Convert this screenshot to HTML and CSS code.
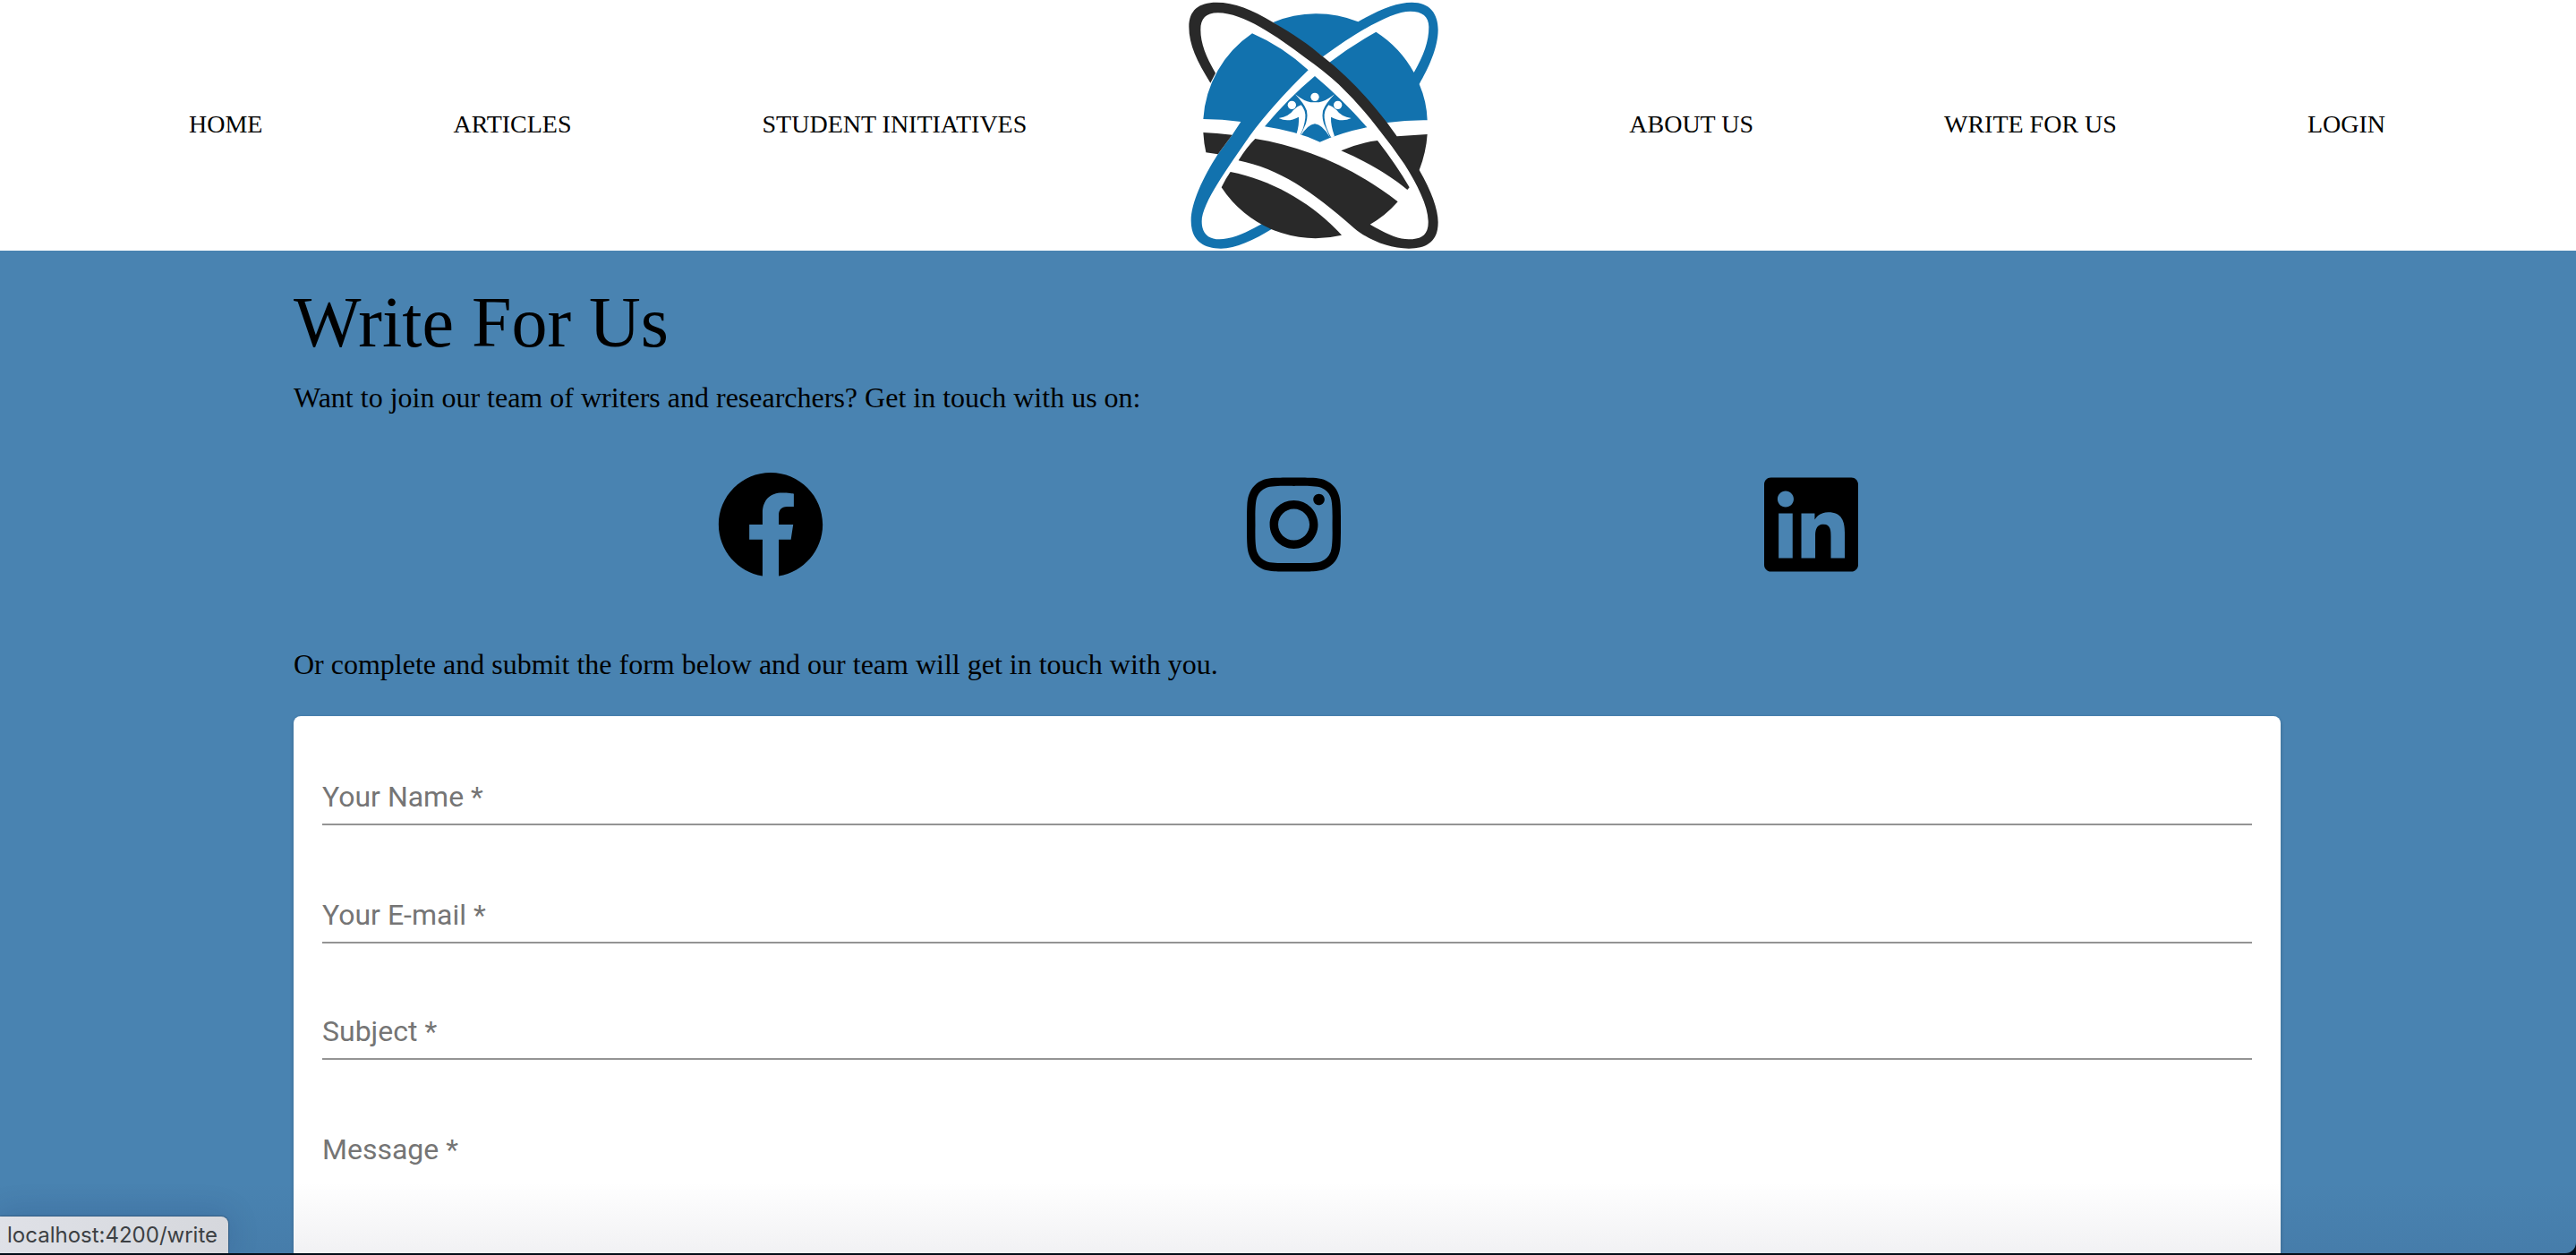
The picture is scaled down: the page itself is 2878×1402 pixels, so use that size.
FILE: index.html
```html
<!DOCTYPE html>
<html lang="en">
<head>
<meta charset="utf-8">
<title>Write For Us</title>
<link rel="stylesheet" href="styles.css">
</head>
<body>
<header class="navbar">
  <a class="nav-link">HOME</a>
  <a class="nav-link">ARTICLES</a>
  <a class="nav-link">STUDENT INITIATIVES</a>
  <svg class="logo" viewBox="54 0 840 840" aria-label="Logo">
    <g fill="#1272ae">
      <path d="M106 399A376 376 0 0 1 270 112Q370 155 458 235C380 310 310 390 262 455C190 560 101 680 101 742C101 785 125 802 160 802C200 802 250 780 303 750L340 765C275 805 215 833 165 833C100 833 65 800 65 740C65 680 105 595 155 517L203 452L232 408Q170 399 106 399Z"/>
      <path d="M340 75A376 376 0 0 1 625 73C700 30 755 8 805 8C865 8 893 45 893 100C893 160 860 230 830 282Q855 340 857 403Q790 402 722 411L660 360L528 210Q600 155 685 107A376 376 0 0 1 812 243C845 185 862 140 862 90C862 55 840 38 800 38C740 38 630 100 507 190Z"/>
      <path d="M480 255Q575 335 655 427Q570 444 497 476Q420 440 312 424Q390 330 480 255Z"/>
    </g>
    <g fill="#292929">
      <path d="M130 278C85 205 58 150 58 90C58 35 90 8 150 8C210 8 270 32 340 75C410 115 460 150 507 190C590 255 660 330 722 411L755 457L857 450Q853 510 830 570C870 640 893 700 893 745C893 805 860 833 795 833C730 833 660 805 612 765C470 640 360 565 224 538Q250 495 280 465C440 490 610 560 758 676Q715 725 665 752C720 785 760 802 795 802C840 802 862 785 860 740Q858 700 835 650Q815 605 780 550Q740 490 690 428Q630 350 560 283Q510 237 450 195C350 120 240 43 155 43C115 43 97 62 97 100C97 145 115 190 147 245Z"/>
      <path d="M106 444Q150 446 203 452L155 517L115 511Q108 480 106 444Z"/>
      <path d="M197 576C340 605 470 680 570 788A376 376 0 0 1 167 628Q180 600 197 576Z"/>
      <path d="M568 505Q630 478 690 471Q755 555 797 628L790 636C730 585 650 540 568 505Z"/>
    </g>
    <g fill="#fff">
      <circle cx="480" cy="325" r="14"/>
      <circle cx="403" cy="352" r="14"/>
      <circle cx="557" cy="352" r="14"/>
      <path d="M414 316Q445 340 466 343H494Q515 340 546 316Q516 347 507 371Q502 400 515 425L531 461Q505 417 480 415Q455 417 429 461L445 425Q458 400 453 371Q444 347 414 316Z"/>
      <path d="M359 396Q394 390 408 369Q420 356 434 352Q450 370 448 395Q444 430 429 455L418 450Q428 420 426 392Q390 412 359 396Z"/>
      <path d="M602 396Q567 390 553 369Q540 356 526 352Q510 370 512 395Q516 430 535 461L546 457Q533 420 534 392Q570 412 602 396Z"/>
    </g>
  </svg>
  <a class="nav-link">ABOUT US</a>
  <a class="nav-link">WRITE FOR US</a>
  <a class="nav-link">LOGIN</a>
</header>
<main class="content">
  <h1 class="title">Write For Us</h1>
  <p class="text">Want to join our team of writers and researchers? Get in touch with us on:</p>
  <div class="socials">
    <svg class="social" viewBox="0 0 512 512"><path d="M504 256C504 119 393 8 256 8S8 119 8 256c0 123.78 90.69 226.38 209.25 245V327.69h-63V256h63v-54.64c0-62.15 37-96.48 93.67-96.48 27.14 0 55.52 4.84 55.52 4.84v61h-31.28c-30.8 0-40.41 19.12-40.41 38.73V256h68.78l-11 71.69h-57.78V501C413.31 482.38 504 379.78 504 256z"/></svg>
    <svg class="social social-narrow" viewBox="0 0 448 512"><path d="M224.1 141c-63.6 0-114.9 51.3-114.9 114.9s51.3 114.9 114.9 114.9S339 319.5 339 255.9 287.7 141 224.1 141zm0 189.6c-41.1 0-74.7-33.5-74.7-74.7s33.5-74.7 74.7-74.7 74.7 33.5 74.7 74.7-33.6 74.7-74.7 74.7zm146.4-194.3c0 14.9-12 26.8-26.8 26.8-14.9 0-26.8-12-26.8-26.8s12-26.8 26.8-26.8 26.8 12 26.8 26.8zm76.1 27.2c-1.7-35.9-9.9-67.7-36.2-93.9-26.2-26.2-58-34.4-93.9-36.2-37-2.1-147.9-2.1-184.9 0-35.8 1.7-67.6 9.9-93.9 36.1s-34.4 58-36.2 93.9c-2.1 37-2.1 147.9 0 184.9 1.7 35.9 9.9 67.7 36.2 93.9s58 34.4 93.9 36.2c37 2.1 147.9 2.1 184.9 0 35.9-1.7 67.7-9.9 93.9-36.2 26.2-26.2 34.4-58 36.2-93.9 2.1-37 2.1-147.8 0-184.8zM398.8 388c-7.8 19.6-22.9 34.7-42.6 42.6-29.5 11.7-99.5 9-132.1 9s-102.7 2.6-132.1-9c-19.6-7.8-34.7-22.9-42.6-42.6-11.7-29.5-9-99.5-9-132.1s-2.6-102.7 9-132.1c7.8-19.6 22.9-34.7 42.6-42.6 29.5-11.7 99.5-9 132.1-9s102.7-2.6 132.1 9c19.6 7.8 34.7 22.9 42.6 42.6 11.7 29.5 9 99.5 9 132.1s2.7 102.7-9 132.1z"/></svg>
    <svg class="social social-narrow" viewBox="0 0 448 512"><path d="M416 32H31.9C14.3 32 0 46.5 0 64.3v383.4C0 465.5 14.3 480 31.9 480H416c17.6 0 32-14.5 32-32.3V64.3c0-17.8-14.4-32.3-32-32.3zM135.4 416H69V202.2h66.5V416zm-33.2-243c-21.3 0-38.5-17.3-38.5-38.5S80.9 96 102.2 96c21.2 0 38.5 17.3 38.5 38.5 0 21.3-17.2 38.5-38.5 38.5zm282.1 243h-66.4V312c0-24.8-.5-56.7-34.5-56.7-34.6 0-39.9 27-39.9 54.9V416h-66.4V202.2h63.7v29.2h.9c8.9-16.8 30.6-34.5 62.9-34.5 67.2 0 79.7 44.3 79.7 101.9V416z"/></svg>
  </div>
  <p class="text">Or complete and submit the form below and our team will get in touch with you.</p>
  <form class="card">
    <div class="field"><label>Your Name *</label></div>
    <div class="field"><label>Your E-mail *</label></div>
    <div class="field"><label>Subject *</label></div>
    <div class="field field-message"><label>Message *</label></div>
  </form>
</main>
<div class="bottom-shade"></div>
<div class="status">localhost:4200/write</div>
</body>
</html>
```
FILE: styles.css
```css
* { box-sizing: border-box; }
html { height: 1402px; background: #030d18; }
body {
  position: relative;
  display: flex;
  flex-direction: column;
  margin: 0;
  height: 1400px;
  background: #4983b1;
  border-bottom-right-radius: 12px;
  font-family: "Liberation Serif", "Times New Roman", serif;
  color: #000;
}
.navbar {
  display: flex;
  flex-shrink: 0;
  align-items: center;
  justify-content: space-evenly;
  height: 280px;
  background: #fff;
}
.nav-link {
  font-size: 28px;
  line-height: 32px;
  white-space: nowrap;
  padding-bottom: 3px;
}
.nav-link:first-child { margin-left: -2px; }
.logo {
  width: 280px;
  height: 280px;
  margin-left: -33px;
}
.content {
  display: flex;
  flex: 1;
  flex-direction: column;
  width: 2220px;
  margin-left: 328px;
}
.title {
  margin: 32px 0 0;
  font-size: 80px;
  font-weight: 400;
  line-height: 96px;
}
.text {
  margin: 16px 0;
  font-size: 32px;
  line-height: 40px;
}
.socials {
  display: flex;
  justify-content: space-evenly;
  padding: 46px 0 60px;
}
.social { width: 120px; height: 120px; }
.social-narrow { width: 105px; }
.card {
  flex: 1;
  margin-top: 22px;
  padding: 0 32px;
  background: #fff;
  border-radius: 8px 8px 0 0;
  box-shadow: 0 2px 4px rgba(0, 0, 0, .2);
}
.field {
  display: flex;
  align-items: flex-end;
  height: 130px;
  padding-bottom: 12px;
  border-bottom: 2px solid #949494;
  font-family: Roboto, sans-serif;
  font-size: 32px;
  line-height: 36px;
  color: #757575;
}
.field:first-child { height: 122px; }
.field:nth-child(2) { height: 132px; }
.field-message { height: 132px; border-color: transparent; }
.bottom-shade {
  position: absolute;
  inset: auto 0 0;
  height: 80px;
  background: linear-gradient(rgba(20, 20, 60, 0), rgba(20, 20, 60, .06));
  border-bottom-right-radius: 12px;
}
.status {
  position: absolute;
  left: 0;
  bottom: 0;
  width: 255px;
  height: 41px;
  padding-left: 8px;
  border-top-right-radius: 8px;
  background: linear-gradient(100deg, #dfe1e7, #d5d7dc);
  box-shadow: 0 0 2px rgba(0, 0, 0, .7), 0 -2px 36px rgba(0, 20, 80, .15);
  clip-path: inset(-60px -60px 0 0);
  font: 24px/41px Inter, sans-serif;
  color: #3c4043;
}
```
